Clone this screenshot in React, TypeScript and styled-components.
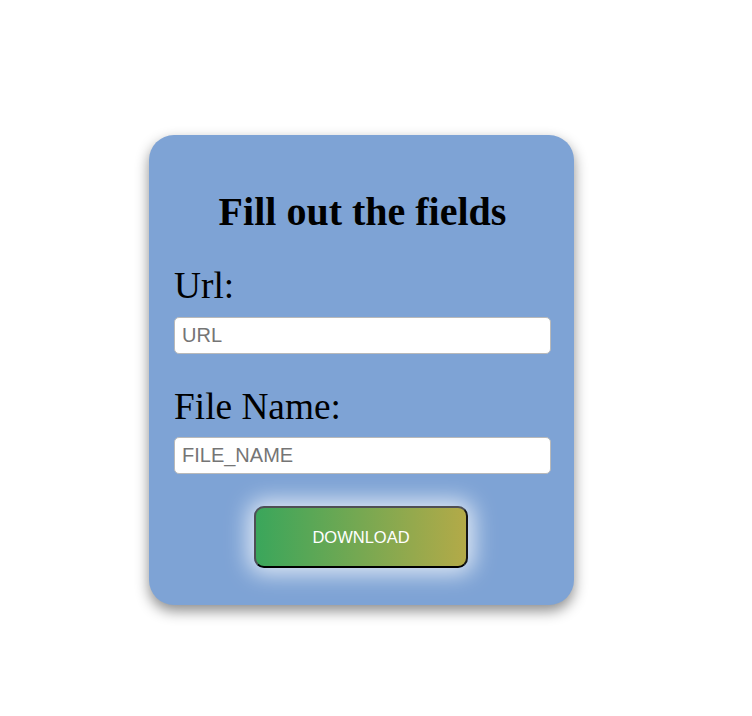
import React from "react";
import styled, { createGlobalStyle } from "styled-components";

const GlobalStyle = createGlobalStyle`
  html, body { margin: 0; padding: 0; background: #ffffff; }
  body { font-family: "Liberation Serif", "Times New Roman", serif; }
`;

const Page = styled.div`
  display: flex;
  align-items: flex-start;
  padding: 135px 0 0 149px;
  min-height: 716px;
  box-sizing: border-box;
`;

const Card = styled.form`
  width: 425px;
  box-sizing: border-box;
  padding: 54px 23px 37px 25px;
  background: #7ea3d5;
  border-radius: 25px;
  box-shadow: 0 6px 14px rgba(0, 0, 0, 0.45);
  display: flex;
  flex-direction: column;
`;

const Title = styled.h1`
  margin: 0 0 29px;
  font-family: "Liberation Serif", "Times New Roman", serif;
  font-size: 40px;
  line-height: 46px;
  font-weight: bold;
  text-align: center;
  color: #000;
`;

const Label = styled.label<{ $gap?: number }>`
  display: block;
  margin: ${(p) => p.$gap ?? 0}px 0 ${(p) => (p.$gap ? 9 : 10)}px;
  font-family: "Liberation Serif", "Times New Roman", serif;
  font-size: 28pt;
  line-height: 43px;
  color: #000;
`;

const Input = styled.input`
  width: 377px;
  height: 37px;
  box-sizing: border-box;
  margin: 0;
  padding: 0 7px;
  border: 1px solid #b9b9b9;
  border-radius: 5px;
  background: #fff;
  font-family: "Liberation Sans", Arial, sans-serif;
  font-size: 20px;
  color: #222;
  outline: none;
  &::placeholder { color: #757575; }
`;

const Button = styled.button`
  align-self: center;
  margin: 32px 0 0 -3px;
  width: 214px;
  height: 62px;
  box-sizing: border-box;
  border: 2px solid;
  border-color: #4f4f55 #151515 #000 #4f4f55;
  border-radius: 10px;
  background: linear-gradient(to right, #3aa65b, #b3aa48);
  box-shadow: 0 0 22px 6px rgba(255, 255, 255, 0.75);
  color: #fff;
  font-family: "Liberation Sans", Arial, sans-serif;
  font-size: 16.5px;
  cursor: pointer;
`;

export default function App() {
  return (
    <>
      <GlobalStyle />
      <Page>
        <Card onSubmit={(e) => e.preventDefault()}>
          <Title>Fill out the fields</Title>
          <Label htmlFor="url">Url:</Label>
          <Input id="url" type="text" placeholder="URL" />
          <Label htmlFor="fname" $gap={31}>File Name:</Label>
          <Input id="fname" type="text" placeholder="FILE_NAME" />
          <Button type="submit">DOWNLOAD</Button>
        </Card>
      </Page>
    </>
  );
}
